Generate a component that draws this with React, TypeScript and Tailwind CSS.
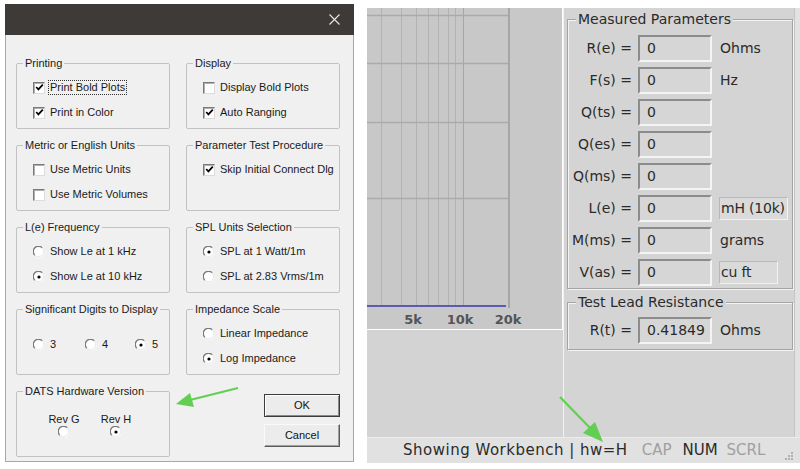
import React from "react";

const Check = ({ checked }: { checked?: boolean }) => (
  <span className="w-[12px] h-[12px] shrink-0 bg-white border border-t-[#7a7a7a] border-l-[#7a7a7a] border-b-[#dcdcdc] border-r-[#dcdcdc] shadow-[inset_1px_1px_0_#b0b0b0] flex items-center justify-center">
    {checked && (
      <svg width="9" height="9" viewBox="0 0 9 9">
        <path d="M1.2 4 L3.4 6.4 L7.8 1.6" stroke="#000" strokeWidth="1.7" fill="none" />
      </svg>
    )}
  </span>
);

const Radio = ({ on }: { on?: boolean }) => (
  <svg width="12" height="12" viewBox="0 0 12 12" className="shrink-0">
    <circle cx="6" cy="6" r="5.5" fill="#fff" />
    <path d="M1.8 9.2 A5 5 0 0 1 9.2 1.8" stroke="#7a7a7a" strokeWidth="1.3" fill="none" />
    <path d="M9.2 1.8 A5 5 0 0 1 1.8 9.2" stroke="#e6e6e6" strokeWidth="1" fill="none" />
    {on && <circle cx="6" cy="6" r="1.6" fill="#000" />}
  </svg>
);

const Group = ({ title, children }: { title: string; children?: React.ReactNode }) => (
  <div className="relative h-[66px] border border-[#c2c2c2] rounded-[2px]">
    <span className="absolute -top-[8px] left-[6px] px-[2px] bg-[#f0f0f0] leading-[14px] text-[#1a1a1a]">{title}</span>
    {children}
  </div>
);

const CItem = ({ label, checked, focus }: { label: string; checked?: boolean; focus?: boolean }) => (
  <div className="h-[25px] flex items-center gap-[5px]">
    <Check checked={checked} />
    <span className={focus ? "border border-dotted border-[#333] px-[1px] leading-[13px] -ml-[2px]" : "leading-[13px]"}>{label}</span>
  </div>
);

const RItem = ({ label, on }: { label: string; on?: boolean }) => (
  <div className="h-[25px] flex items-center gap-[5px]">
    <Radio on={on} />
    <span className="leading-[13px]">{label}</span>
  </div>
);

const Items = ({ children }: { children: React.ReactNode }) => (
  <div className="pt-[11px] pl-[16px] flex flex-col">{children}</div>
);

const ParamRow = ({ label, value, unit, unitBox, boxW }: { label: string; value: string; unit?: string; unitBox?: boolean; boxW?: string }) => (
  <div className="h-[27px] flex items-center whitespace-nowrap">
    <span className="w-[64px] text-right text-[#2a2a2a]">{label}</span>
    <div className="ml-[6px] w-[74px] h-[27px] flex items-center pl-[7px] bg-[#d6d6d6] border-2 border-t-[#8c8c8c] border-l-[#8c8c8c] border-b-[#f4f4f4] border-r-[#f4f4f4] text-[#2a2a2a]">
      {value}
    </div>
    {unit && !unitBox && <span className="ml-[8px] text-[#2a2a2a]">{unit}</span>}
    {unit && unitBox && (
      <div className={`ml-[7px] h-[23px] flex items-center pl-[1px] bg-[#dadada] border border-t-[#b8b8b8] border-l-[#b8b8b8] border-b-[#f2f2f2] border-r-[#f2f2f2] text-[#2a2a2a] tracking-[-0.2px] ${boxW ?? ""}`}>
        {unit}
      </div>
    )}
  </div>
);

const vLines = [14, 34, 49, 61, 71, 81, 88];

export default function App() {
  return (
    <div className="relative w-[800px] h-[469px] bg-white overflow-hidden flex items-start">
      {/* Left dialog */}
      <div className="ml-[5px] mt-[4px] w-[349px] h-[458px] flex flex-col font-['Liberation_Sans',Arial,sans-serif] text-[11px] text-[#1a1a1a]">
        <div className="h-[31px] bg-[#3d3a37] flex items-center justify-end pr-[14px]">
          <svg width="11" height="11" viewBox="0 0 11 11">
            <path d="M0.5 0.5 L10.5 10.5 M10.5 0.5 L0.5 10.5" stroke="#e8e8e8" strokeWidth="1.1" />
          </svg>
        </div>
        <div className="flex-1 bg-[#f0f0f0] border-l border-r border-b border-[#a8a8a8] pt-[28px] pl-[10px]">
          <div className="grid grid-cols-[154px_154px] gap-x-[16px] gap-y-[16px]">
            <Group title="Printing">
              <Items>
                <CItem label="Print Bold Plots" checked focus />
                <CItem label="Print in Color" checked />
              </Items>
            </Group>
            <Group title="Display">
              <Items>
                <CItem label="Display Bold Plots" />
                <CItem label="Auto Ranging" checked />
              </Items>
            </Group>
            <Group title="Metric or English Units">
              <Items>
                <CItem label="Use Metric Units" />
                <CItem label="Use Metric Volumes" />
              </Items>
            </Group>
            <Group title="Parameter Test Procedure">
              <Items>
                <CItem label="Skip Initial Connect Dlg" checked />
              </Items>
            </Group>
            <Group title="L(e) Frequency">
              <Items>
                <RItem label="Show Le at 1 kHz" />
                <RItem label="Show Le at 10 kHz" on />
              </Items>
            </Group>
            <Group title="SPL Units Selection">
              <Items>
                <RItem label="SPL at 1 Watt/1m" on />
                <RItem label="SPL at 2.83 Vrms/1m" />
              </Items>
            </Group>
            <Group title="Significant Digits to Display">
              <div className="pt-[22px] pl-[16px] flex">
                <div className="w-[52px] h-[25px] flex items-center gap-[5px]"><Radio /><span>3</span></div>
                <div className="w-[50px] h-[25px] flex items-center gap-[5px]"><Radio /><span>4</span></div>
                <div className="h-[25px] flex items-center gap-[5px]"><Radio on /><span>5</span></div>
              </div>
            </Group>
            <Group title="Impedance Scale">
              <Items>
                <RItem label="Linear Impedance" />
                <RItem label="Log Impedance" on />
              </Items>
            </Group>
            <Group title="DATS Hardware Version">
              <div className="pt-[20px] pl-[30px] flex gap-[18px]">
                <div className="w-[34px] flex flex-col items-center">
                  <span className="leading-[14px]">Rev G</span>
                  <Radio />
                </div>
                <div className="w-[34px] flex flex-col items-center">
                  <span className="leading-[14px]">Rev H</span>
                  <Radio on />
                </div>
              </div>
            </Group>
            <div className="pt-[3px] pl-[78px] flex flex-col gap-[7px]">
              <button className="w-[76px] h-[23px] bg-[#ececec] border border-[#3c3c3c] shadow-[inset_1px_1px_0_#fff,inset_-1px_-1px_0_#8a8a8a] text-[11px] text-[#111]">
                OK
              </button>
              <button className="w-[76px] h-[23px] bg-[#ececec] border border-t-[#fafafa] border-l-[#fafafa] border-b-[#5a5a5a] border-r-[#5a5a5a] shadow-[inset_-1px_-1px_0_#a0a0a0] text-[11px] text-[#111]">
                Cancel
              </button>
            </div>
          </div>
        </div>
      </div>

      {/* Right app window */}
      <div className="ml-[13px] mt-[8px] w-[433px] h-[455px] flex flex-col font-['DejaVu_Sans',Verdana,sans-serif] text-[14px] bg-[#d4d4d4]">
        <div className="flex h-[429px]">
          <div className="w-[196px] flex flex-col">
            <div className="h-[322px] bg-[#c8c8c8] border-b border-white border-r">
              <svg width="195" height="321" viewBox="0 0 195 321" className="block">
                {vLines.map((x) => (
                  <rect key={"v" + x} x={x} y={0} width={1} height={298} fill="#b2b2b2" />
                ))}
                <rect x={96} y={0} width={1} height={298} fill="#a6a6a6" />
                <rect x={141} y={0} width={2} height={300} fill="#a6a6a6" />
                <path d="M0 7.5 H141 M0 55.5 H141 M0 114.5 H141 M0 190.5 H141" stroke="#aaaaaa" strokeWidth="1.5" fill="none" />
                <rect x={0} y={297} width={139} height={2} fill="#5b5bb0" />
                <text x={46} y={316} textAnchor="middle" fontSize="13" fontWeight="bold" fill="#555" fontFamily="DejaVu Sans, sans-serif">5k</text>
                <text x={93} y={316} textAnchor="middle" fontSize="13" fontWeight="bold" fill="#555" fontFamily="DejaVu Sans, sans-serif">10k</text>
                <text x={141} y={316} textAnchor="middle" fontSize="13" fontWeight="bold" fill="#555" fontFamily="DejaVu Sans, sans-serif">20k</text>
              </svg>
            </div>
            <div className="flex-1 bg-[#d3d3d3]" />
          </div>
          <div className="w-[237px] flex border-l border-[#f2f2f2]">
            <div className="ml-[3px] w-[226px] flex flex-col">
              <div className="relative mt-[11px] h-[270px] border border-[#a4a4a4] shadow-[inset_1px_1px_0_#f4f4f4,1px_1px_0_#f4f4f4]">
                <span className="absolute -top-[10px] left-[8px] px-[2px] bg-[#d4d4d4] leading-[18px] text-[#2a2a2a]">Measured Parameters</span>
                <div className="pt-[15px] flex flex-col gap-[5px]">
                  <ParamRow label="R(e) =" value="0" unit="Ohms" />
                  <ParamRow label="F(s) =" value="0" unit="Hz" />
                  <ParamRow label="Q(ts) =" value="0" />
                  <ParamRow label="Q(es) =" value="0" />
                  <ParamRow label="Q(ms) =" value="0" />
                  <ParamRow label="L(e) =" value="0" unit="mH (10k)" unitBox boxW="w-[69px]" />
                  <ParamRow label="M(ms) =" value="0" unit="grams" />
                  <ParamRow label="V(as) =" value="0" unit="cu ft" unitBox boxW="w-[59px]" />
                </div>
              </div>
              <div className="relative mt-[13px] h-[48px] border border-[#a4a4a4] shadow-[inset_1px_1px_0_#f4f4f4,1px_1px_0_#f4f4f4]">
                <span className="absolute -top-[10px] left-[8px] px-[2px] bg-[#d4d4d4] leading-[18px] text-[#2a2a2a]">Test Lead Resistance</span>
                <div className="pt-[14px]">
                  <ParamRow label="R(t) =" value="0.41849" unit="Ohms" />
                </div>
              </div>
            </div>
            <div className="ml-auto w-[6px] bg-[#e2e2e2] border-l border-[#c4c4c4]" />
          </div>
        </div>
        <div className="h-[26px] bg-[#e1e1e1] border-t border-[#ececec] flex items-center pl-[36px] text-[15px] relative whitespace-nowrap">
          <span className="text-[#2b2b2b] tracking-[0.5px]">Showing Workbench | hw=H</span>
          <span className="ml-[14px] text-[#a0a0a0]">CAP</span>
          <span className="ml-[11px] text-[#2b2b2b]">NUM</span>
          <span className="ml-[9px] text-[#a0a0a0]">SCRL</span>
          <svg width="10" height="10" viewBox="0 0 10 10" className="ml-auto mr-[6px] mt-[10px]">
            <rect x="7" y="1" width="2" height="2" fill="#b0b0b0" />
            <rect x="4" y="4" width="2" height="2" fill="#b0b0b0" />
            <rect x="7" y="4" width="2" height="2" fill="#b0b0b0" />
            <rect x="1" y="7" width="2" height="2" fill="#b0b0b0" />
            <rect x="4" y="7" width="2" height="2" fill="#b0b0b0" />
            <rect x="7" y="7" width="2" height="2" fill="#b0b0b0" />
          </svg>
        </div>
      </div>

      {/* Annotation arrows */}
      <svg className="absolute inset-0 pointer-events-none" width="800" height="469" viewBox="0 0 800 469">
        <line x1="238" y1="388" x2="190" y2="400" stroke="#62cf52" strokeWidth="2.2" />
        <polygon points="176,404 194,407 190,393" fill="#62cf52" />
        <line x1="560" y1="397" x2="592" y2="430" stroke="#62cf52" strokeWidth="2.2" />
        <polygon points="603,442 583,433 595,422" fill="#62cf52" />
      </svg>
    </div>
  );
}
